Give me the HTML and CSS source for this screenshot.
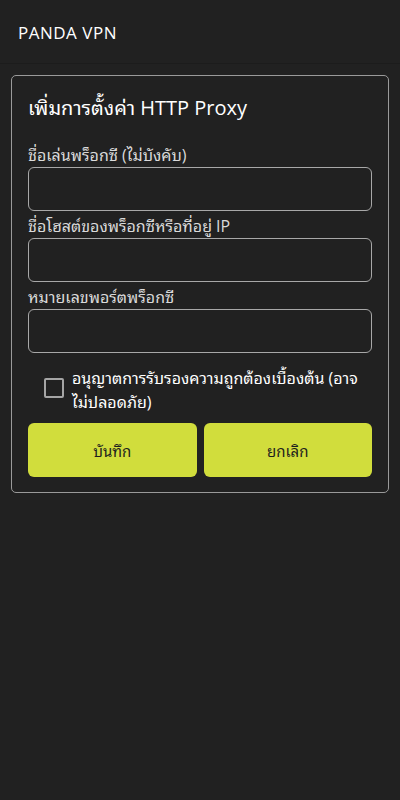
FILE: index.html
```html
<!DOCTYPE html>
<html lang="th">
<head>
    <meta charset="UTF-8">
    <meta name="viewport" content="width=device-width, initial-scale=1.0">
    <title>Panda VPN - HTTP Proxy</title>
    <link rel="stylesheet" href="styles.css">
</head>
<body>
    <header class="topbar">
        <h1>PANDA VPN</h1>
    </header>
    <main>
        <section class="proxy-card">
            <h2>เพิ่มการตั้งค่า HTTP Proxy</h2>
            <form class="proxy-form">
                <label for="proxy-name">ชื่อเล่นพร็อกซี (ไม่บังคับ)</label>
                <input type="text" id="proxy-name" name="proxy-name">

                <label for="proxy-host">ชื่อโฮสต์ของพร็อกซีหรือที่อยู่ IP</label>
                <input type="text" id="proxy-host" name="proxy-host">

                <label for="proxy-port">หมายเลขพอร์ตพร็อกซี</label>
                <input type="text" id="proxy-port" name="proxy-port">

                <div class="check-row">
                    <span class="check-box"></span>
                    <span class="check-text">อนุญาตการรับรองความถูกต้องเบื้องต้น (อาจไม่ปลอดภัย)</span>
                </div>

                <div class="actions">
                    <button type="button">บันทึก</button>
                    <button type="button">ยกเลิก</button>
                </div>
            </form>
        </section>
    </main>
</body>
</html>
```
FILE: styles.css
```css
/* Basic reset */
* {
    margin: 0;
    padding: 0;
    box-sizing: border-box;
}

body {
    font-family: 'Open Sans', 'Noto Sans Thai Looped', sans-serif;
    background-color: #212121;
    color: #fff;
    width: 400px;
    height: 800px;
}

/* Top bar */
.topbar {
    height: 64px;
    padding: 0 18px;
    display: flex;
    align-items: center;
    border-bottom: 1px solid #1c1c1c;
}

.topbar h1 {
    font-size: 17px;
    font-weight: normal;
    letter-spacing: 0.5px;
    margin-top: 2px;
}

/* Card */
.proxy-card {
    margin: 11px 11px 0;
    border: 1px solid #9a9a9a;
    border-radius: 5px;
    padding: 16px 16px 15px;
}

.proxy-card h2 {
    font-size: 20px;
    font-weight: normal;
    line-height: 32px;
    margin-bottom: 20px;
}

.proxy-form label {
    display: block;
    font-size: 16px;
    line-height: 22px;
    color: #dadada;
}

.proxy-form input {
    display: block;
    width: 100%;
    height: 44px;
    margin: 1px 0 4px;
    background: transparent;
    border: 1px solid #a8a8a8;
    border-radius: 6px;
    color: #fff;
    padding: 0 10px;
}

/* Checkbox row */
.check-row {
    display: flex;
    align-items: flex-start;
    margin-top: 13px;
    padding-left: 16px;
}

.check-box {
    flex: none;
    width: 20px;
    height: 20px;
    margin-top: 12px;
    margin-right: 8px;
    border: 2px solid #a5a5a5;
    border-radius: 2px;
}

.check-text {
    font-size: 16px;
    line-height: 24px;
}

/* Buttons */
.actions {
    display: flex;
    gap: 7px;
    margin-top: 9px;
}

.actions button {
    flex: 1;
    height: 54px;
    background-color: #d1dd3c;
    color: #1e1e1e;
    border: none;
    border-radius: 6px;
    font-family: inherit;
    font-size: 15px;
}
```
